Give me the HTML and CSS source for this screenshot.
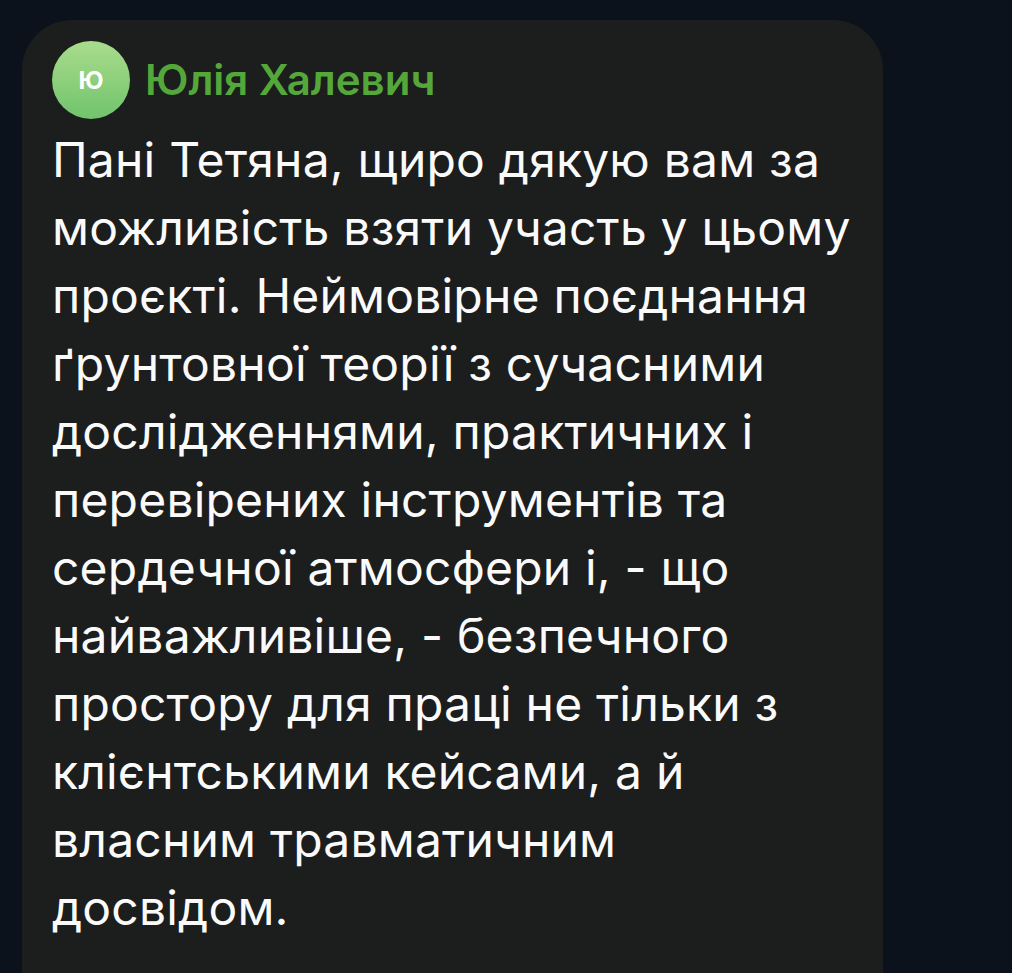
FILE: index.html
```html
<!DOCTYPE html>
<html lang="uk">
<head>
<meta charset="utf-8">
<title>Повідомлення</title>
<link rel="stylesheet" href="styles.css">
</head>
<body>
<div class="page">
  <div class="message">
    <div class="header">
      <div class="avatar">Ю</div>
      <div class="name">Юлія Халевич</div>
    </div>
    <p class="text">Пані Тетяна, щиро дякую вам за можливість взяти участь у цьому проєкті. Неймовірне поєднання ґрунтовної теорії з сучасними дослідженнями, практичних і перевірених інструментів та сердечної атмосфери і, - що найважливіше, - безпечного простору для праці не тільки з клієнтськими кейсами, а й власним травматичним досвідом.</p>
  </div>
</div>
</body>
</html>
```

FILE: styles.css
```css
html, body {
  margin: 0;
  padding: 0;
  background: #0c121c;
  height: 100%;
  overflow: hidden;
}

.page {
  padding: 20px 0 0 22px;
  font-family: Inter, "Noto Sans", sans-serif;
}

.message {
  width: 861px;
  box-sizing: border-box;
  background: #1c1d1d;
  border-radius: 50px 50px 0 0;
  padding: 21px 30px 120px 30px;
}

.header {
  display: flex;
  align-items: center;
  gap: 15px;
}

.avatar {
  width: 78px;
  height: 78px;
  border-radius: 50%;
  background: linear-gradient(180deg, #a9dc8d 0%, #71c46c 100%);
  color: #fff;
  font-weight: 700;
  font-size: 24px;
  display: flex;
  align-items: center;
  justify-content: center;
  flex-shrink: 0;
}

.name {
  color: #54a83a;
  font-size: 42px;
  font-weight: 600;
  line-height: 1;
}

.text {
  margin: 7px 0 0 0;
  color: #fafafa;
  font-size: 48px;
  line-height: 68px;
  font-weight: 400;
  letter-spacing: 0.2px;
}
```
